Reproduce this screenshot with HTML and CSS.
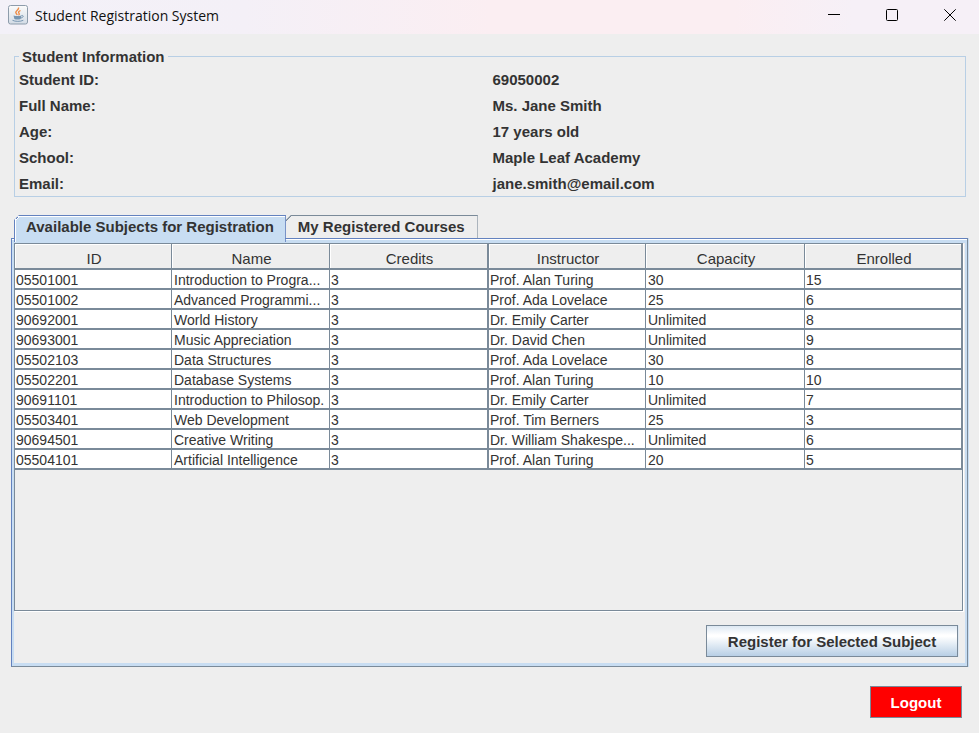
FILE: index.html
```html
<!DOCTYPE html>
<html lang="en">
<head>
<meta charset="utf-8">
<title>Student Registration System</title>
<link rel="stylesheet" href="styles.css">
</head>
<body>
<header class="titlebar">
  <svg class="app-icon" viewBox="0 0 20 20" aria-hidden="true">
    <defs><linearGradient id="tile" x1="0" y1="0" x2="0" y2="1"><stop offset="0" stop-color="#fbfbfb"/><stop offset="1" stop-color="#d3dce6"/></linearGradient></defs>
    <rect x="0.5" y="0.5" width="19" height="18.5" rx="2" fill="url(#tile)" stroke="#8d9cab"/>
    <path d="M10.5 2.5c1 2-2.700 3-2.700 4.800 0 1.200 1.200 1.700 1.400 2.700M12.500 5.500c-1.500.8-2.600 1.600-1.500 2.900.6.7.2 1.300-.5 1.800" fill="none" stroke="#ee8b45" stroke-width="1.400"/>
    <path d="M5.500 10.500c2 .8 6 .8 8 0l-.9 3.500c-1.600.8-4.600.8-6.200 0z" fill="#7896b1"/>
    <path d="M13.500 10.500c2.500-.5 2.300 2-.8 2.600M4.500 15.300c2.500 1.400 8 1.400 10.800 0" fill="none" stroke="#7896b1"/>
  </svg>
  <h1 class="title">Student Registration System</h1>
  <div class="window-controls">
    <button class="window-button" type="button" aria-label="Minimize"><svg viewBox="0 0 12 12"><path d="M0 5.500h12"/></svg></button>
    <button class="window-button" type="button" aria-label="Maximize"><svg viewBox="0 0 12 12"><rect x="0.500" y="0.500" width="11" height="11" rx="1"/></svg></button>
    <button class="window-button" type="button" aria-label="Close"><svg viewBox="0 0 12 12"><path d="M0.300 0.300l11.400 11.400M11.700 0.300l-11.400 11.400"/></svg></button>
  </div>
</header>
<main class="content">
  <fieldset class="info">
    <legend>Student Information</legend>
    <dl class="info-grid">
      <dt>Student ID:</dt><dd>69050002</dd>
      <dt>Full Name:</dt><dd>Ms. Jane Smith</dd>
      <dt>Age:</dt><dd>17 years old</dd>
      <dt>School:</dt><dd>Maple Leaf Academy</dd>
      <dt>Email:</dt><dd>jane.smith@email.com</dd>
    </dl>
  </fieldset>
  <section class="tabs">
    <div class="tab-list" role="tablist">
      <button class="tab tab-active" type="button" role="tab" aria-selected="true">Available Subjects for Registration</button>
      <button class="tab" type="button" role="tab" aria-selected="false">My Registered Courses</button>
    </div>
    <div class="tab-panel" role="tabpanel">
      <div class="table-scroll">
        <table class="subjects">
          <colgroup><col class="col-id"><col class="col-name"><col class="col-credits"><col class="col-instructor"><col class="col-capacity"><col></colgroup>
          <thead>
            <tr><th>ID</th><th>Name</th><th>Credits</th><th>Instructor</th><th>Capacity</th><th>Enrolled</th></tr>
          </thead>
          <tbody>
            <tr><td>05501001</td><td>Introduction to Progra...</td><td>3</td><td>Prof. Alan Turing</td><td>30</td><td>15</td></tr>
            <tr><td>05501002</td><td>Advanced Programmi...</td><td>3</td><td>Prof. Ada Lovelace</td><td>25</td><td>6</td></tr>
            <tr><td>90692001</td><td>World History</td><td>3</td><td>Dr. Emily Carter</td><td>Unlimited</td><td>8</td></tr>
            <tr><td>90693001</td><td>Music Appreciation</td><td>3</td><td>Dr. David Chen</td><td>Unlimited</td><td>9</td></tr>
            <tr><td>05502103</td><td>Data Structures</td><td>3</td><td>Prof. Ada Lovelace</td><td>30</td><td>8</td></tr>
            <tr><td>05502201</td><td>Database Systems</td><td>3</td><td>Prof. Alan Turing</td><td>10</td><td>10</td></tr>
            <tr><td>90691101</td><td>Introduction to Philosop.</td><td>3</td><td>Dr. Emily Carter</td><td>Unlimited</td><td>7</td></tr>
            <tr><td>05503401</td><td>Web Development</td><td>3</td><td>Prof. Tim Berners</td><td>25</td><td>3</td></tr>
            <tr><td>90694501</td><td>Creative Writing</td><td>3</td><td>Dr. William Shakespe...</td><td>Unlimited</td><td>6</td></tr>
            <tr><td>05504101</td><td>Artificial Intelligence</td><td>3</td><td>Prof. Alan Turing</td><td>20</td><td>5</td></tr>
          </tbody>
        </table>
      </div>
      <div class="panel-actions"><button class="register" type="button">Register for Selected Subject</button></div>
    </div>
  </section>
  <footer class="footer"><button class="logout" type="button">Logout</button></footer>
</main>
</body>
</html>
```
FILE: styles.css
```css
* { box-sizing: border-box; }

body {
  margin: 0;
  min-height: 100vh;
  display: flex;
  flex-direction: column;
  background: #eeeeee;
  color: #333333;
  font: 15px/18px "Liberation Sans", Arial, sans-serif;
}

button { font: inherit; color: inherit; }

.titlebar {
  display: flex;
  align-items: center;
  height: 34px;
  padding-left: 8px;
  background: linear-gradient(90deg, #f3f1f8, #f4f0f7 25%, #fbeef2 50%, #fbeef2 75%, #f6f0f7 87%);
}

.app-icon { width: 20px; height: 20px; margin: 0 7px 4px 0; }

.title {
  margin: 0 0 3px;
  color: #111111;
  font: 14px/20px "Open Sans", "Segoe UI", sans-serif;
}

.window-controls { display: flex; margin-left: auto; }

.window-button {
  display: flex;
  align-items: center;
  justify-content: center;
  width: 58px;
  height: 30px;
  margin-bottom: 4px;
  padding: 0;
  border: 0;
  background: none;
}

.window-button svg {
  width: 12px;
  height: 12px;
  fill: none;
  stroke: #000000;
}

.content {
  flex: 1;
  display: flex;
  flex-direction: column;
  padding: 14px 11px 15px;
}

.info {
  margin: 0 2px 0 3px;
  padding: 0 3px 3px 4px;
  border: 1px solid #b8cfe5;
  font-weight: bold;
}

.info legend { padding: 0 3px; line-height: 17px; }

.info-grid {
  display: grid;
  grid-template-columns: 1fr 1fr;
  row-gap: 8px;
  margin: 6px 0 0;
}

.info-grid dd { margin: 0; padding-left: 2px; }

.tabs {
  flex: 1;
  display: flex;
  flex-direction: column;
  margin-top: 18px;
}

.tab-list {
  position: relative;
  display: flex;
  padding-left: 3px;
}

.tab {
  height: 24px;
  padding: 0 12px;
  border: 1px solid #7a8a99;
  border-left: 0;
  border-bottom-color: #6382bf;
  background: linear-gradient(135deg, #7a8a99 4px, #eeeeee 4px);
  clip-path: polygon(5px 0, 100% 0, 100% 100%, 0 100%, 0 5px);
  font-weight: bold;
  white-space: nowrap;
}

.tab-active {
  height: 27px;
  margin-bottom: -3px;
  padding: 0 11px 4px;
  border: 1px solid #6382bf;
  border-bottom: 0;
  background: linear-gradient(135deg, #6382bf 3px, #ffffff 3px, #ffffff 4px, #c8ddf2 4px);
  box-shadow: inset 1px 1px #ffffff;
}

.tab-panel {
  flex: 1;
  display: flex;
  flex-direction: column;
  margin-top: -1px;
  padding: 4px 4px 8px 2px;
  border: 1px solid #7a8a99;
  border-top-color: #6382bf;
  border-left-color: #6382bf;
  box-shadow: inset 0 1px #ffffff, inset 2px 4px #c8ddf2, inset -2px -3px #c8ddf2, 1px 0 #c8ddf2;
}

.table-scroll {
  flex: 1;
  border: 1px solid #7a8a99;
  box-shadow: 1px 1px #ffffff;
}

.subjects {
  width: 100%;
  border-collapse: separate;
  border-spacing: 0;
  table-layout: fixed;
}

.col-id { width: 157px; }
.col-name { width: 158px; }
.col-credits { width: 159px; }
.col-instructor { width: 157px; }
.col-capacity { width: 159px; }

.subjects th {
  height: 26px;
  padding: 5px 0 0 2px;
  border: solid #7a8a99;
  border-width: 0 1px 2px 0;
  box-shadow: inset 1px 1px #ffffff;
  font-weight: normal;
  line-height: 18px;
}

.subjects td {
  height: 20px;
  padding: 2px 0 0 1px;
  border: solid #7a8a99;
  border-width: 0 1px 2px 0;
  background: #ffffff;
  font-size: 14px;
  line-height: 16px;
  white-space: nowrap;
  overflow: hidden;
}

.subjects td + td { padding-left: 2px; }
.subjects td:nth-child(3), .subjects td:nth-child(4), .subjects td:nth-child(6) { padding-left: 1px; }

.subjects th:nth-child(3), .subjects td:nth-child(3) { border-right-width: 2px; }

.panel-actions {
  display: flex;
  justify-content: flex-end;
  padding: 14px 5px 1px;
}

.register, .logout {
  height: 32px;
  padding: 2px 0 0;
  border: 1px solid #7a8a99;
  font-weight: bold;
}

.register {
  width: 252px;
  background: linear-gradient(#dde8f3, #ffffff 30%, #ffffff 35%, #b8cfe5);
  box-shadow: 1px 0 #dde8f3;
}

.footer {
  display: flex;
  justify-content: flex-end;
  padding: 19px 6px 0;
}

.logout {
  width: 92px;
  background: #ff0000;
  color: #ffffff;
}
```
